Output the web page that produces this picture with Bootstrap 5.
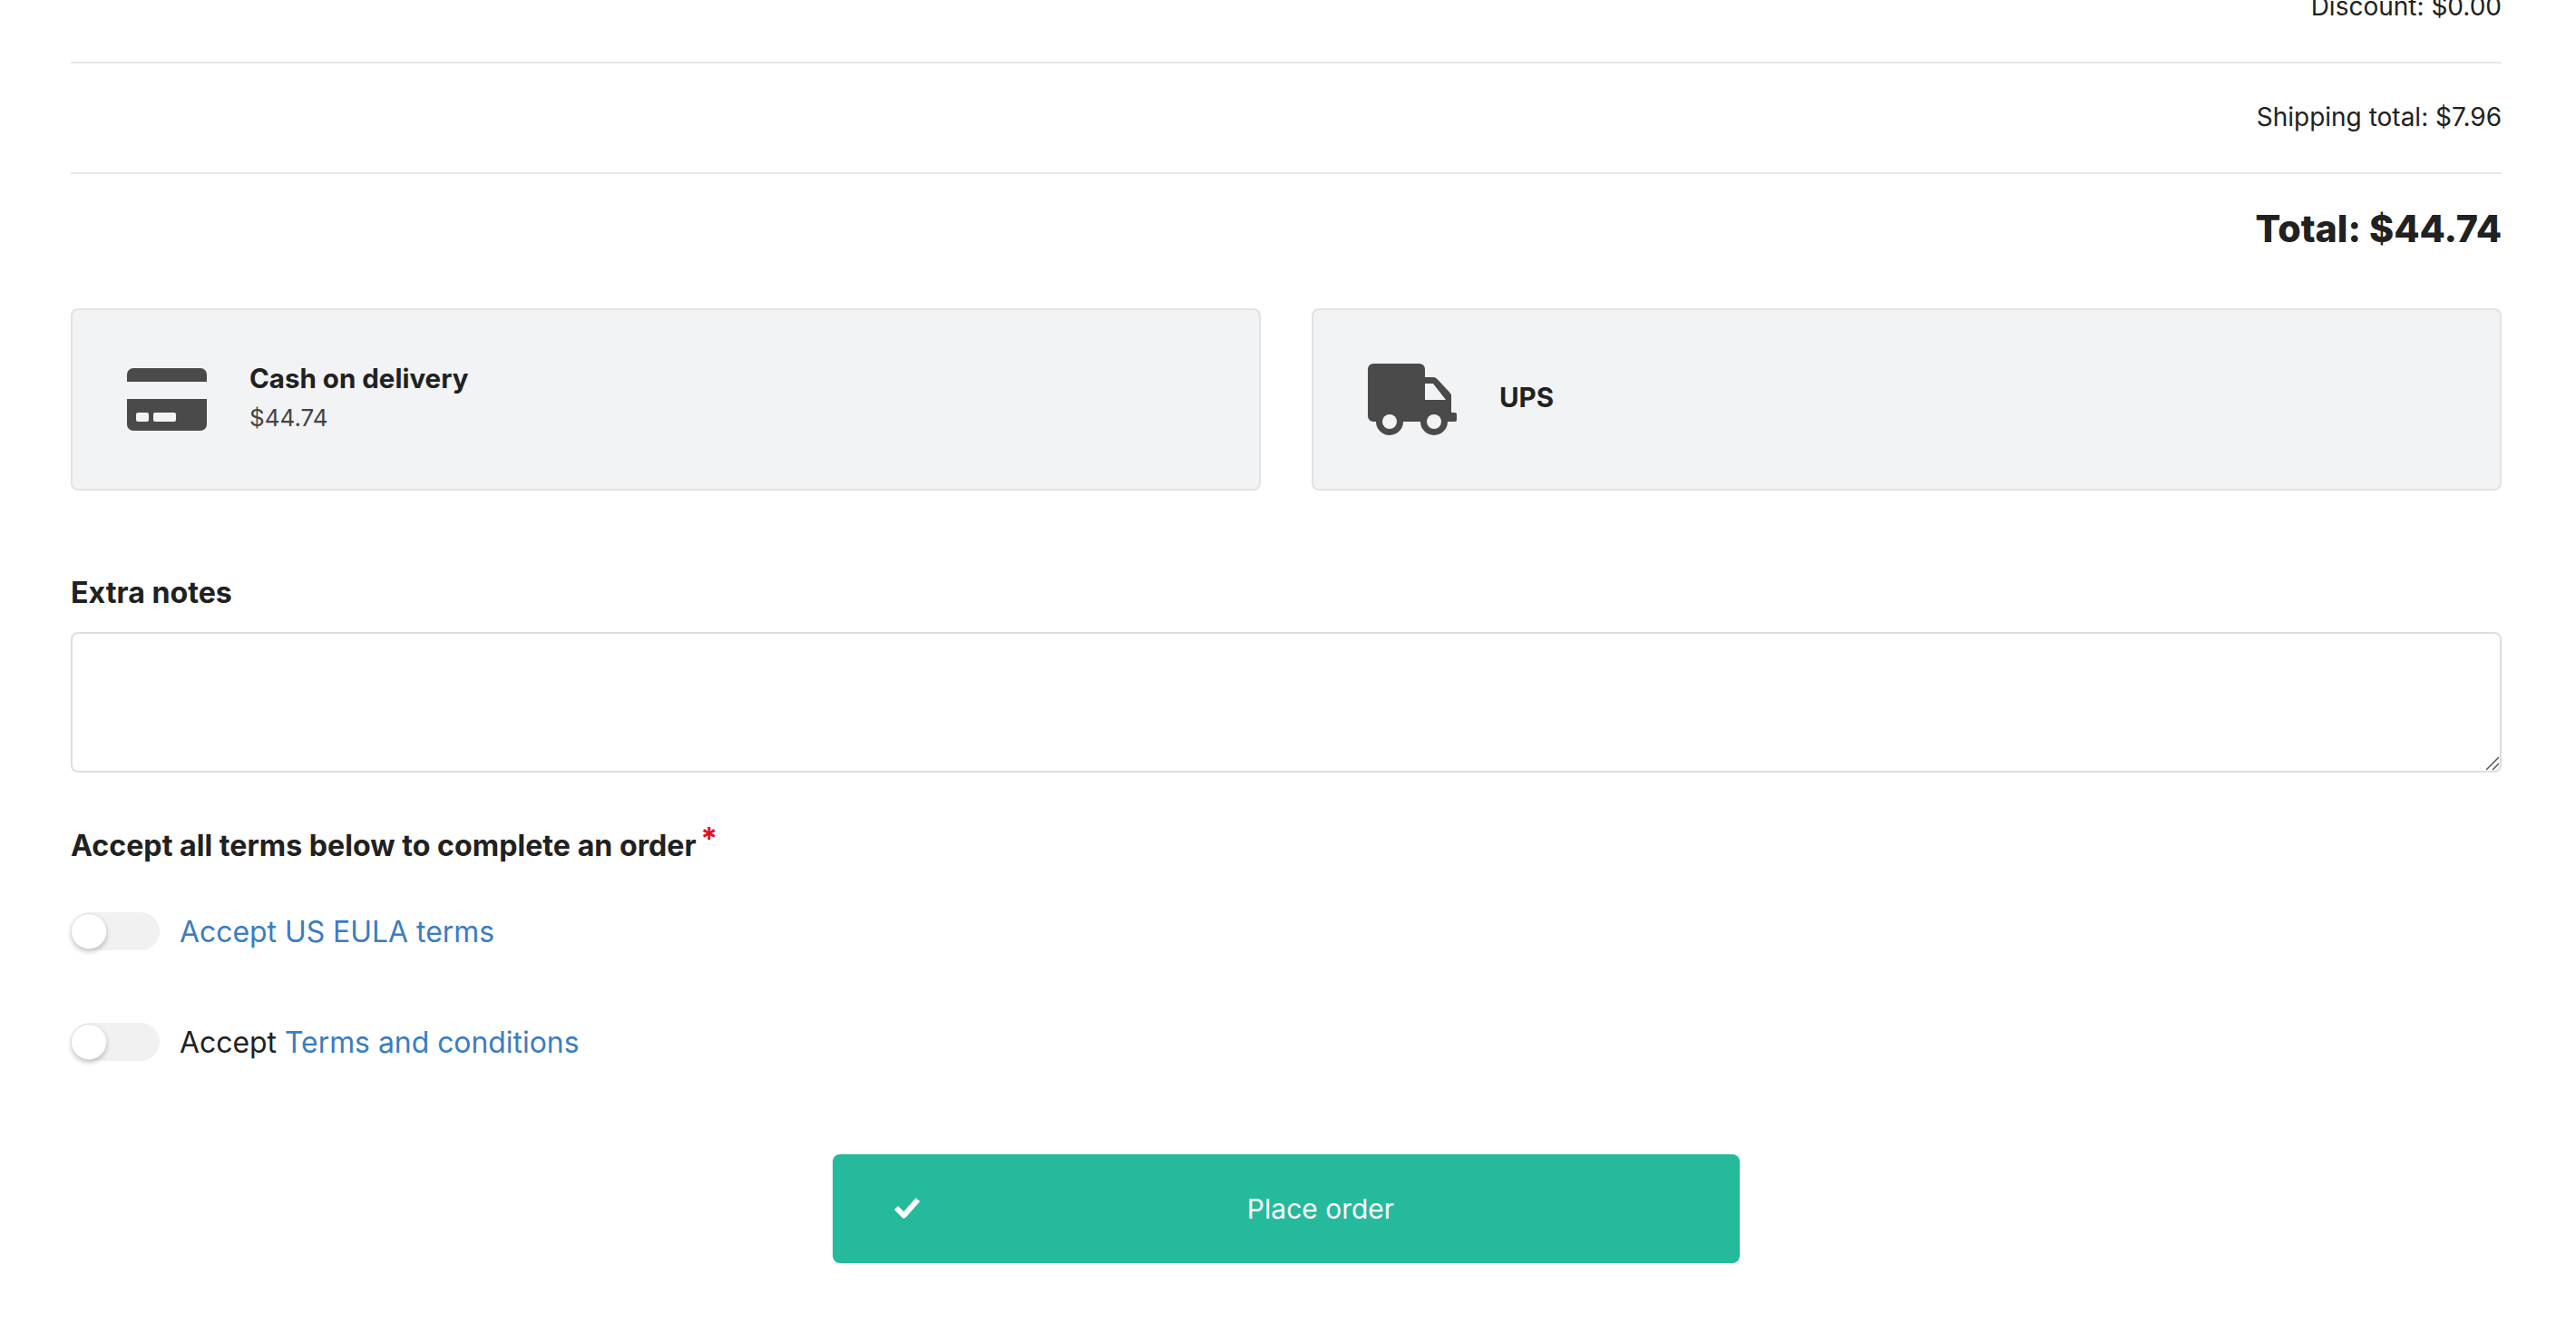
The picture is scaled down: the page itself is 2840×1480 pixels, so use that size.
<!DOCTYPE html>
<html lang="en">
<head>
  <meta charset="UTF-8">
  <title>Checkout</title>
  <meta name="viewport" content="width=device-width, initial-scale=1">
  <link href="https://cdn.jsdelivr.net/npm/bootstrap@5.3.3/dist/css/bootstrap.min.css" rel="stylesheet">
  <style>
    html, body {
      height: 1480px;
      overflow: hidden;
    }
    body {
      background: #fff;
      color: #212121;
      font-family: "Inter", "Liberation Sans", sans-serif;
      font-size: 32px;
    }
    .checkout-wrap {
      margin-top: -52px;
      padding-left: 78px;
      padding-right: 82px;
    }
    .sum-row {
      height: 122px;
      padding-bottom: 3px;
      font-size: 28px;
      border-bottom: 2px solid #e8e8e8;
    }
    .sum-total {
      height: 60px;
      margin-top: 31px;
      margin-bottom: 57px;
      font-size: 41.2px;
      font-weight: 800;
    }
    .pay-row {
      gap: 56px;
    }
    .pay-card {
      flex: 1 1 0;
      height: 201px;
      flex-direction: row;
      align-items: center;
      padding-left: 60px;
      background: #f2f3f5;
      border: 2px solid #e2e2e2;
      border-radius: 8px;
    }
    .pay-card svg {
      flex-shrink: 0;
      margin-right: 47px;
      fill: #4a4a4a;
    }
    .pay-text {
      margin-bottom: 4px;
    }
    .pay-name {
      font-size: 29.5px;
      line-height: 44px;
      font-weight: 700;
    }
    .pay-single {
      margin-bottom: 5px;
    }
    .pay-price {
      font-size: 26px;
      line-height: 44px;
      color: #444;
    }
    .sec-title {
      font-size: 32.2px;
      line-height: 44px;
      font-weight: 700;
    }
    .notes-title {
      margin-top: 91px;
      margin-bottom: 21px;
    }
    .notes-box {
      height: 155px;
      border: 2px solid #dedede;
      border-radius: 8px;
    }
    .notes-box::-webkit-resizer {
      background: url("data:image/svg+xml,%3Csvg xmlns='http://www.w3.org/2000/svg' width='16' height='16'%3E%3Cpath d='M1 15L15 1M8 15l7-7' stroke='%23555' stroke-width='1.500' fill='none'/%3E%3C/svg%3E") no-repeat right bottom;
    }
    .terms-title {
      margin-top: 59px;
      margin-bottom: 51px;
    }
    .req-mark {
      color: #e0121f;
      font-size: 34px;
      line-height: 0;
      top: -0.22em;
      margin-left: -3px;
    }
    .term-row {
      height: 42px;
      margin-bottom: 80px;
      padding: 0;
      font-size: 31.9px;
      gap: 22px;
    }
    .term-row label {
      padding-top: 2px;
    }
    .term-row .form-check-input {
      position: relative;
      float: none;
      width: 98px;
      height: 42px;
      margin: 0;
      background-color: #f1f1f1;
      background-image: none;
      border: 0;
      border-radius: 21px;
    }
    .term-row .form-check-input::after {
      content: "";
      position: absolute;
      left: 0;
      top: 1px;
      width: 40px;
      height: 40px;
      border-radius: 50%;
      background: #fff;
      border: 1px solid #e0e0e0;
      box-shadow: 0 3px 5px rgba(0,0,0,0.2);
    }
    .term-row a {
      color: #3a7cc4;
      text-decoration: none;
    }
    .order-btn {
      width: 1000px;
      height: 120px;
      margin-top: 103px;
      padding: 0;
      background: #25ba9b;
      border: 0;
      border-radius: 8px;
      color: #fff;
      font-size: 30px;
    }
    .order-btn svg {
      margin-left: 67px;
      margin-bottom: 2px;
    }
    .order-btn span {
      padding-right: 21px;
    }
  </style>
</head>
<body>

<div class="checkout-wrap">
  <div class="sum-row d-flex align-items-center justify-content-end">Discount: $0.00</div>
  <div class="sum-row d-flex align-items-center justify-content-end">Shipping total: $7.96</div>
  <div class="sum-total d-flex align-items-center justify-content-end">Total: $44.74</div>

  <div class="pay-row d-flex">
    <div class="card pay-card">
      <svg width="88" height="69" viewBox="0 0 88 69"><path d="M0 15V7a7 7 0 0 1 7-7h74a7 7 0 0 1 7 7v8z"/><path fill-rule="evenodd" d="M0 34h88v28a7 7 0 0 1-7 7H7a7 7 0 0 1-7-7zM12 49a2 2 0 0 0-2 2v6a2 2 0 0 0 2 2h10a2 2 0 0 0 2-2v-6a2 2 0 0 0-2-2zM31 49a2 2 0 0 0-2 2v6a2 2 0 0 0 2 2h21a2 2 0 0 0 2-2v-6a2 2 0 0 0-2-2z"/></svg>
      <div class="pay-text">
        <div class="pay-name">Cash on delivery</div>
        <div class="pay-price">$44.74</div>
      </div>
    </div>
    <div class="card pay-card">
      <svg width="98" height="79" viewBox="0 0 98 79"><path d="M6 0h51a6 6 0 0 1 6 6v9h9a5 5 0 0 1 4 1.500l14 15a6 6 0 0 1 2 4.500V54h4a2 2 0 0 1 2 2v6a2 2 0 0 1-2 2H6a6 6 0 0 1-6-6V6a6 6 0 0 1 6-6z"/><path d="M63 22h9l14 18H63z" fill="#f2f3f5"/><circle cx="24" cy="64" r="15"/><circle cx="73" cy="64" r="15"/><circle cx="24" cy="64" r="8" fill="#f2f3f5"/><circle cx="73" cy="64" r="8" fill="#f2f3f5"/></svg>
      <div class="pay-name pay-single">UPS</div>
    </div>
  </div>

  <div class="sec-title notes-title">Extra notes</div>
  <textarea class="form-control notes-box"></textarea>

  <div class="sec-title terms-title">Accept all terms below to complete an order <sup class="req-mark">*</sup></div>

  <div class="form-check term-row d-flex align-items-center">
    <input class="form-check-input" type="checkbox" id="termEula">
    <label for="termEula"><a href="#">Accept US EULA terms</a></label>
  </div>
  <div class="form-check term-row d-flex align-items-center">
    <input class="form-check-input" type="checkbox" id="termCond">
    <label for="termCond">Accept <a href="#">Terms and conditions</a></label>
  </div>

  <button class="btn order-btn d-flex align-items-center mx-auto" type="button">
    <svg width="30" height="24" viewBox="0 0 30 24"><path d="M3 12l8.500 8.500L27 3" fill="none" stroke="#fff" stroke-width="6" stroke-linejoin="round"/></svg>
    <span class="flex-grow-1 text-center">Place order</span>
  </button>
</div>

<script src="https://cdn.jsdelivr.net/npm/bootstrap@5.3.3/dist/js/bootstrap.bundle.min.js"></script>
</body>
</html>
